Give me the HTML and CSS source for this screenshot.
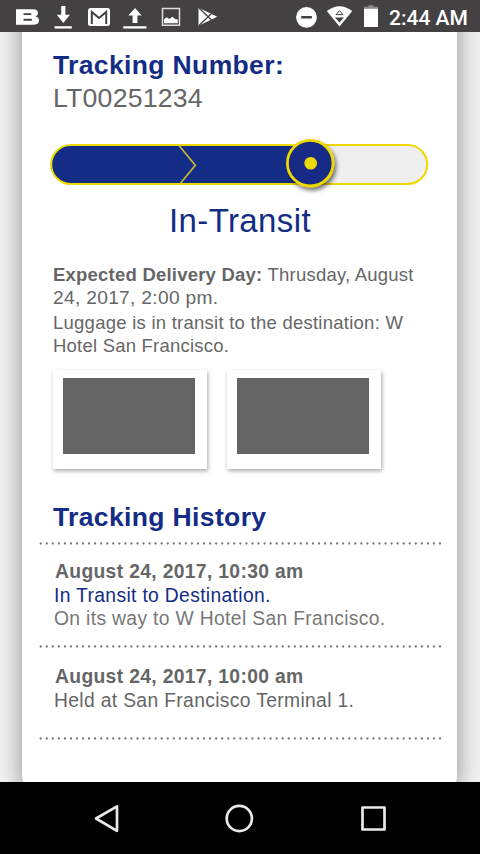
FILE: index.html
```
<!DOCTYPE html>
<html lang="en">
<head>
<meta charset="utf-8">
<title>Luggage Tracking</title>
<link rel="stylesheet" href="styles.css">
</head>
<body>
<div class="phone">
  <header class="status">
    <svg class="status-icons" width="220" height="32" viewBox="0 0 220 32" fill="#fff">
      <path fill-rule="evenodd" d="M16 9.200H33Q38 9.200 38 13Q38 15.800 35.500 16.500Q39 17.300 39 20.300Q39 24.800 33 24.800H16ZM23.500 13.200V15.100H30.500Q31.500 15.100 31.500 14.100Q31.500 13.200 30.500 13.200ZM23.500 18.800V20.800H31Q32.200 20.800 32.200 19.800Q32.200 18.800 31 18.800Z"/>
      <path d="M61.200 6h4.200v8.800h4.500L63.300 23l-6.500-8.200h4.400zM54.500 26.200h17.300v2.300H54.500z"/>
      <rect x="88" y="8" width="22" height="18" rx="2.500"/>
      <path fill="none" stroke="#434142" stroke-width="2" d="M91.800 24V12L99 18L106.200 12V24"/>
      <path d="M135 8l6.700 7.500h-4.300V23h-4.800v-7.500h-4.300zM123.300 26.200h23.200v2.300h-23.200z"/>
      <path fill="none" stroke="#ddd" stroke-width="1.500" d="M162.500 8.600h17v16.700h-17z"/>
      <path d="M164 23.200v-4l2.700-2 2.500 1.800 3.300-2.200 2.500 2.200 2.800.6v3.600z"/>
      <path d="M198.500 7.800L217.300 16.800L198.500 25.800Z"/>
      <path fill="none" stroke="#434142" stroke-width="1.300" d="M199 8l12.500 12M199 25.500L211.500 13.500"/>
    </svg>
    <div class="status-end">
      <svg width="93" height="32" viewBox="296 0 93 32" fill="#fff">
        <circle cx="306.500" cy="17.300" r="10.400"/>
        <path fill="#434142" d="M301.200 16h10.700v2.500h-10.700z"/>
        <path d="M326.800 11Q339.500 1.500 352.300 11L339.500 26.600Z"/>
        <path fill="none" stroke="#434142" stroke-width="1" d="M336 14.600l3.500-3.900 3.500 3.900z"/>
        <path fill="#434142" d="M335 17.500h9l-4.500 5z"/>
        <path fill="#8e8d8d" d="M368.500 5.200h5v1.600h4.500v2.200h-14V6.800h4.500z"/>
        <path d="M364 8.800h14v18.200h-14z"/>
      </svg>
      <span class="clock">2:44 AM</span>
    </div>
  </header>

  <main class="screen">
    <article class="sheet">
      <h1 class="heading">Tracking Number:</h1>
      <p class="number">LT00251234</p>

      <svg class="progress" width="386" height="61" viewBox="46 134 386 61">
        <defs>
          <filter id="soft" x="-30%" y="-30%" width="170%" height="170%">
            <feDropShadow dx="2" dy="3" stdDeviation="2" flood-color="#000" flood-opacity=".55"/>
          </filter>
        </defs>
        <rect x="51.200" y="145" width="376" height="39" rx="19.500" fill="#efefef"/>
        <path fill="#132c86" d="M310 145H70.700a19.500 19.500 0 0 0 0 39H310z"/>
        <rect x="51.200" y="145" width="376" height="39" rx="19.500" fill="none" stroke="#efd800" stroke-width="2"/>
        <path fill="none" stroke="#c9b92e" stroke-width="1.700" d="M179 145.500L195.300 165.300L180.300 183.500"/>
        <circle cx="310.200" cy="163.200" r="22.800" fill="#132c86" stroke="#efd800" stroke-width="2.800" filter="url(#soft)"/>
        <circle cx="310.700" cy="163.200" r="6.300" fill="#efd80a"/>
      </svg>

      <p class="state">In-Transit</p>

      <section class="summary">
        <p class="line line-day"><b>Expected Delivery Day:</b> Thrusday, August</p>
        <p class="line line-time">24, 2017, 2:00 pm.</p>
        <p class="line line-note">Luggage is in transit to the destination: W</p>
        <p class="line">Hotel San Francisco.</p>
      </section>

      <div class="photos">
        <div class="photo"><div class="photo-fill"></div></div>
        <div class="photo"><div class="photo-fill"></div></div>
      </div>

      <h2 class="heading history-heading">Tracking History</h2>
      <section class="history">
        <svg class="dots" width="404" height="3"><path d="M1.700 1.500H402"/></svg>
        <div class="event">
          <p class="when">August 24, 2017, 10:30 am</p>
          <p class="what what-active">In Transit to Destination.</p>
          <p class="what what-detail">On its way to W Hotel San Francisco.</p>
        </div>
        <svg class="dots" width="404" height="3"><path d="M1.700 1.500H402"/></svg>
        <div class="event event-last">
          <p class="when">August 24, 2017, 10:00 am</p>
          <p class="what">Held at San Francisco Terminal 1.</p>
        </div>
        <svg class="dots" width="404" height="3"><path d="M1.700 1.500H402"/></svg>
      </section>
    </article>
  </main>

  <nav class="navbar">
    <svg width="480" height="72" viewBox="0 782 480 72" fill="none" stroke="#e9e9e9" stroke-width="2.700" stroke-linejoin="round">
      <path d="M117 806.300V830.800L96 818.500Z"/>
      <circle cx="239.300" cy="818.500" r="12.600"/>
      <path d="M362.500 807.500h22v22h-22z"/>
    </svg>
  </nav>
</div>
</body>
</html>
```
FILE: styles.css
```
* { box-sizing: border-box; }

body {
  margin: 0;
  font-family: "Liberation Sans", Arial, sans-serif;
  color: #666;
}

h1, h2, p { margin: 0; }
svg { display: block; flex: none; }

.phone {
  width: 480px;
  height: 854px;
  display: flex;
  flex-direction: column;
  overflow: hidden;
}

.status {
  height: 32px;
  flex: none;
  display: flex;
  justify-content: space-between;
  background: #434142;
}

.status-end { display: flex; }

.clock {
  width: 91px;
  font: 500 21px/36px Roboto, sans-serif;
  color: #fff;
  white-space: nowrap;
}

.screen {
  height: 750px;
  flex: none;
  display: flow-root;
  padding: 0 23px 0 22px;
  background: #f1f1f1;
  overflow: hidden;
}

.sheet {
  height: 800px;
  margin-top: -40px;
  padding: 56px 0 0 31px;
  background: #fff;
  border-radius: 0 0 16px 16px;
  box-shadow: 0 0 22px 2px rgba(0, 0, 0, .36);
  white-space: nowrap;
}

.heading {
  font-size: 26.500px;
  line-height: 34px;
  letter-spacing: .36px;
  color: #132c86;
}

.number {
  font-size: 26.700px;
  line-height: 33px;
  letter-spacing: .2px;
}

.progress { margin: 19px 0 0 -7px; }

.state {
  margin: 6px 0 0 116px;
  font-size: 33px;
  line-height: 40px;
  letter-spacing: .38px;
  color: #132c86;
}

.summary { margin-top: 22px; }
.line { font-size: 18.500px; line-height: 23px; letter-spacing: .22px; }
.line-time { font-size: 19.200px; letter-spacing: .3px; }
.line-note { margin-top: 2px; letter-spacing: .25px; }

.photos {
  display: flex;
  gap: 20px;
  margin-top: 13px;
}

.photo {
  width: 154px;
  height: 99px;
  padding: 8px 12px 15px 10px;
  background: #fff;
  box-shadow: 1px 2px 4px rgba(0, 0, 0, .34);
}

.photo-fill { height: 76px; background: #646464; }

.history-heading { margin-top: 31px; }

.history { margin: 8px 0 0 -14px; }

.dots {
  fill: none;
  stroke: #777;
  stroke-width: 2.300;
  stroke-linecap: round;
  stroke-dasharray: 0 6.050;
}

.event {
  padding: 15px 0 15px 15px;
  font-size: 19.300px;
  line-height: 24px;
  letter-spacing: .34px;
}

.event-last { padding: 17px 0 24px 15px; }
.when { margin-left: 1px; font-weight: bold; }
.what-active { color: #132c86; }
.what-detail { line-height: 22px; color: #777; }

.navbar { flex: none; background: #000; }
```
